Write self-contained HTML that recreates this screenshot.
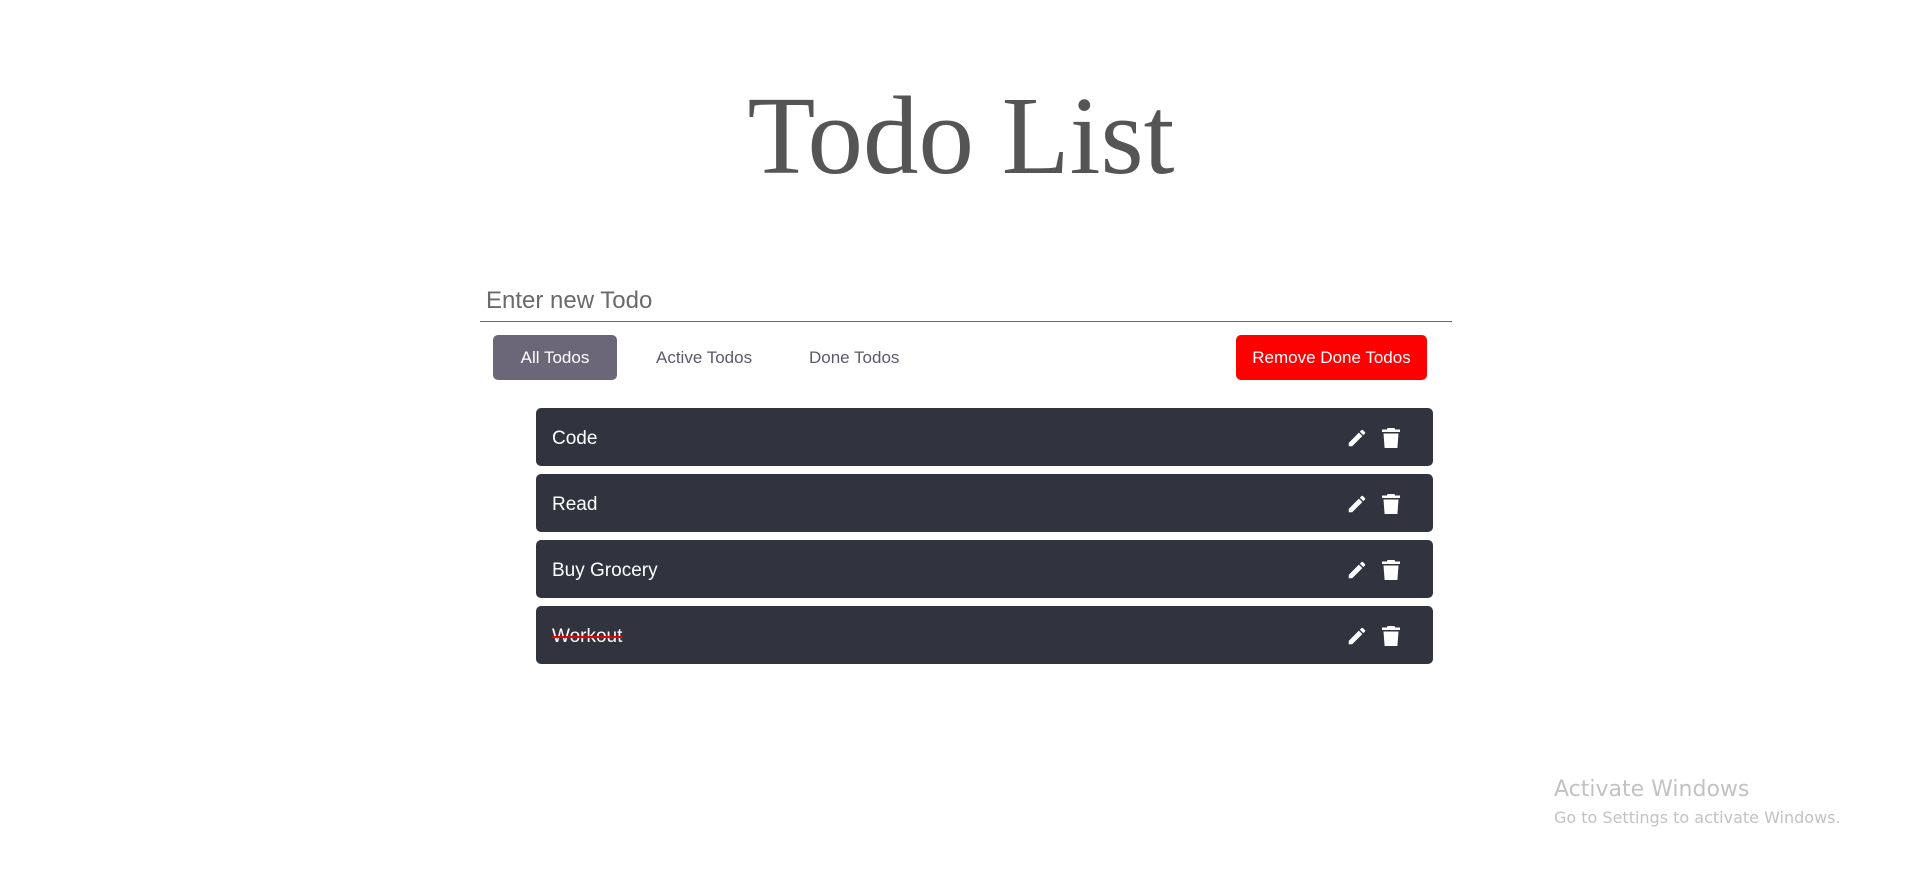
<!DOCTYPE html>
<html><head><meta charset="utf-8"><style>
*{margin:0;padding:0;box-sizing:border-box}
body{width:1920px;height:874px;background:#fff;position:relative;overflow:hidden;font-family:"Liberation Sans",sans-serif}
.abs{position:absolute}
h1{position:absolute;left:0;width:1922px;text-align:center;top:72px;font:400 111px/130px "Liberation Serif",serif;color:#555}
.inp{left:486px;top:287px;font-size:24px;color:#6a6a6a}
.line{left:480px;top:321px;width:972px;height:1px;background:#666}
.btn{top:335px;height:45px;line-height:45px;font-size:17px;text-align:center;border-radius:5px}
.row{left:536px;width:897px;height:58px;background:#31343f;border-radius:5px;color:#fff;font-size:19px;line-height:62px;padding-left:16px}
.ic{position:absolute;top:19px}
.wm{color:#c2c2c2;font-family:"DejaVu Sans","Liberation Sans",sans-serif}
</style></head><body>
<h1>Todo List</h1>
<div class="abs inp">Enter new Todo</div>
<div class="abs line"></div>
<div class="abs btn" style="left:493px;width:124px;background:#6b6778;color:#fff">All Todos</div>
<div class="abs btn" style="left:656px;color:#5a5a6a">Active Todos</div>
<div class="abs btn" style="left:809px;color:#5a5a6a">Done Todos</div>
<div class="abs btn" style="left:1236px;width:191px;background:#ff0000;color:#fff">Remove Done Todos</div>

<div class="abs row" style="top:408px">Code<svg class="ic" style="left:810px" width="22" height="22" viewBox="0 0 24 24"><path fill="#fff" d="M3 17.25V21h3.75L17.8 9.94l-3.75-3.75L3 17.25zM20.7 7.04a1 1 0 000-1.41l-2.34-2.34a1 1 0 00-1.41 0l-1.83 1.83 3.75 3.75 1.83-1.83z"/></svg><svg class="ic" style="left:845px" width="20" height="22" viewBox="0 0 20 22"><path fill="#fff" d="M6.5 1h7l.6 1.5H19v2.5H1V2.5h4.9zM2.5 6.5h15L16.4 21H3.6z"/></svg></div>
<div class="abs row" style="top:474px">Read<svg class="ic" style="left:810px" width="22" height="22" viewBox="0 0 24 24"><path fill="#fff" d="M3 17.25V21h3.75L17.8 9.94l-3.75-3.75L3 17.25zM20.7 7.04a1 1 0 000-1.41l-2.34-2.34a1 1 0 00-1.41 0l-1.83 1.83 3.75 3.75 1.83-1.83z"/></svg><svg class="ic" style="left:845px" width="20" height="22" viewBox="0 0 20 22"><path fill="#fff" d="M6.5 1h7l.6 1.5H19v2.5H1V2.5h4.9zM2.5 6.5h15L16.4 21H3.6z"/></svg></div>
<div class="abs row" style="top:540px">Buy Grocery<svg class="ic" style="left:810px" width="22" height="22" viewBox="0 0 24 24"><path fill="#fff" d="M3 17.25V21h3.75L17.8 9.94l-3.75-3.75L3 17.25zM20.7 7.04a1 1 0 000-1.41l-2.34-2.34a1 1 0 00-1.41 0l-1.83 1.83 3.75 3.75 1.83-1.83z"/></svg><svg class="ic" style="left:845px" width="20" height="22" viewBox="0 0 20 22"><path fill="#fff" d="M6.5 1h7l.6 1.5H19v2.5H1V2.5h4.9zM2.5 6.5h15L16.4 21H3.6z"/></svg></div>
<div class="abs row" style="top:606px"><span style="text-decoration:line-through;text-decoration-color:#e00;text-decoration-thickness:2px">Workout</span><svg class="ic" style="left:810px" width="22" height="22" viewBox="0 0 24 24"><path fill="#fff" d="M3 17.25V21h3.75L17.8 9.94l-3.75-3.75L3 17.25zM20.7 7.04a1 1 0 000-1.41l-2.34-2.34a1 1 0 00-1.41 0l-1.83 1.83 3.75 3.75 1.83-1.83z"/></svg><svg class="ic" style="left:845px" width="20" height="22" viewBox="0 0 20 22"><path fill="#fff" d="M6.5 1h7l.6 1.5H19v2.5H1V2.5h4.9zM2.5 6.5h15L16.4 21H3.6z"/></svg></div>

<div class="abs wm" style="left:1554px;top:777px;font-size:22px">Activate Windows</div>
<div class="abs wm" style="left:1554px;top:808px;font-size:16px">Go to Settings to activate Windows.</div>
</body></html>
